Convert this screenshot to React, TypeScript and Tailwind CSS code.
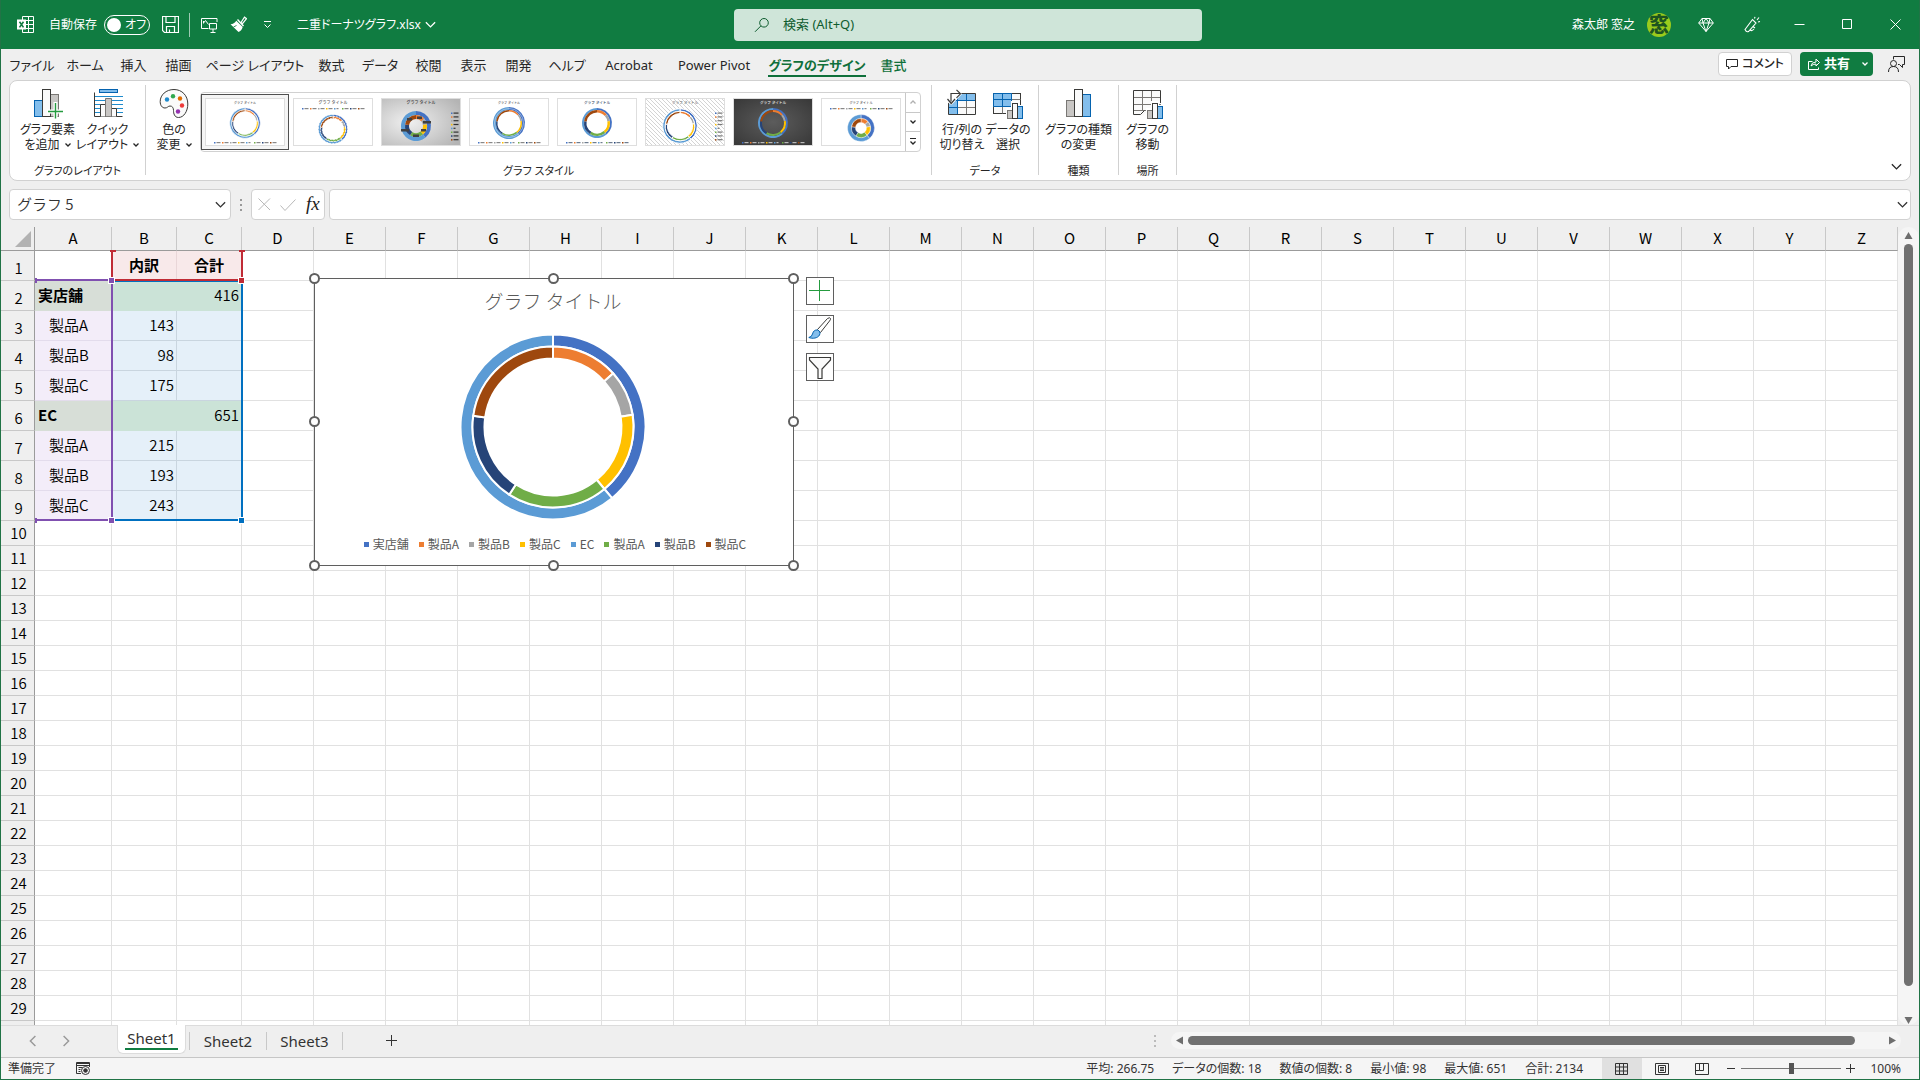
import type { ReactNode } from "react";
import { clsx } from "clsx";

const BLUE = "#4472c4";
const ORANGE = "#ed7d31";
const GRAY = "#a5a5a5";
const YELLOW = "#ffc000";
const SKY = "#5b9bd5";
const GREEN = "#70ad47";
const NAVY = "#264478";
const BROWN = "#9e480e";

type Slice = { value: number; color: string };

const outerRing: Slice[] = [
  { value: 416, color: BLUE },
  { value: 651, color: SKY },
];

const innerRing: Slice[] = [
  { value: 143, color: ORANGE },
  { value: 98, color: GRAY },
  { value: 175, color: YELLOW },
  { value: 215, color: GREEN },
  { value: 193, color: NAVY },
  { value: 243, color: BROWN },
];

const legend = [
  { label: "実店舗", color: "bg-[#4472c4]" },
  { label: "製品A", color: "bg-[#ed7d31]" },
  { label: "製品B", color: "bg-[#a5a5a5]" },
  { label: "製品C", color: "bg-[#ffc000]" },
  { label: "EC", color: "bg-[#5b9bd5]" },
  { label: "製品A", color: "bg-[#70ad47]" },
  { label: "製品B", color: "bg-[#264478]" },
  { label: "製品C", color: "bg-[#9e480e]" },
];

const legendColors = [BLUE, ORANGE, GRAY, YELLOW, SKY, GREEN, NAVY, BROWN];

const tabs = [
  { label: "ファイル", width: "w-[54px]" },
  { label: "ホーム", width: "w-[52px]" },
  { label: "挿入", width: "w-[45px]" },
  { label: "描画", width: "w-[45px]" },
  { label: "ページ レイアウト", width: "w-[108px]" },
  { label: "数式", width: "w-[45px]" },
  { label: "データ", width: "w-[52px]" },
  { label: "校閲", width: "w-[45px]" },
  { label: "表示", width: "w-[45px]" },
  { label: "開発", width: "w-[45px]" },
  { label: "ヘルプ", width: "w-[52px]" },
  { label: "Acrobat", width: "w-[72px]" },
  { label: "Power Pivot", width: "w-[98px]" },
  { label: "グラフのデザイン", width: "w-[108px]", active: true },
  { label: "書式", width: "w-[45px]", green: true },
];

const columns = "ABCDEFGHIJKLMNOPQRSTUVWXYZ".split("");

const ROWS = 29;
const rows = Array.from({ length: ROWS + 1 }, (_, i) => i + 1);

const cells: Record<string, string> = {
  B1: "内訳",
  C1: "合計",
  A2: "実店舗",
  C2: "416",
  A3: "製品A",
  B3: "143",
  A4: "製品B",
  B4: "98",
  A5: "製品C",
  B5: "175",
  A6: "EC",
  C6: "651",
  A7: "製品A",
  B7: "215",
  A8: "製品B",
  B8: "193",
  A9: "製品C",
  B9: "243",
};

function cellClass(col: string, row: number) {
  const plain = "border-[#e1e1e1]";
  if (!"ABC".includes(col) || row > 9) return plain;
  const total = row === 2 || row === 6;
  if (row === 1) {
    return col === "A" ? plain : "border-[#e9d6d8] bg-[#f8e9ea] text-center font-bold";
  }
  if (col === "A") {
    return total
      ? "border-[#d7ded7] bg-[#d7ded7] pl-[3px] text-left font-bold"
      : "border-[#e3dcec] bg-[#f3edf9] pl-[14px] text-left font-[350]";
  }
  return total
    ? "border-[#cbe3d7] bg-[#cbe3d7] pr-0.5 text-right font-[350]"
    : "border-[#c9d5df] bg-[#e5f0f9] pr-0.5 text-right font-[350]";
}

function ringPaths(slices: Slice[], cx: number, cy: number, r1: number, r2: number) {
  const total = slices.reduce((sum, s) => sum + s.value, 0);
  let angle = -Math.PI / 2;
  return slices.map((s) => {
    const a = angle;
    const b = angle + (s.value / total) * Math.PI * 2;
    angle = b;
    const big = b - a > Math.PI ? 1 : 0;
    const p = (r: number, t: number) =>
      `${(cx + r * Math.cos(t)).toFixed(2)} ${(cy + r * Math.sin(t)).toFixed(2)}`;
    return {
      color: s.color,
      d: `M${p(r2, a)}A${r2} ${r2} 0 ${big} 1 ${p(r2, b)}L${p(r1, b)}A${r1} ${r1} 0 ${big} 0 ${p(r1, a)}Z`,
    };
  });
}

type DonutProps = {
  cx: number;
  cy: number;
  hole: number;
  mid: number;
  r: number;
  gap?: string;
  gapWidth?: number;
  dash?: string;
};

function Donut({ cx, cy, hole, mid, r, gap = "#fff", gapWidth = 0.5, dash }: DonutProps) {
  const paths = [
    ...ringPaths(outerRing, cx, cy, mid, r),
    ...ringPaths(innerRing, cx, cy, hole, mid),
  ];
  return (
    <g stroke={gap} strokeWidth={gapWidth} strokeDasharray={dash}>
      {paths.map((p) => (
        <path key={p.d} d={p.d} fill={p.color} />
      ))}
    </g>
  );
}

function Icon({
  size = 16,
  box = size,
  children,
  className,
}: {
  size?: number;
  box?: number;
  children: ReactNode;
  className?: string;
}) {
  return (
    <svg
      width={size}
      height={size}
      viewBox={`0 0 ${box} ${box}`}
      fill="none"
      stroke="currentColor"
      aria-hidden="true"
      className={clsx("shrink-0", className)}
    >
      {children}
    </svg>
  );
}

function Chevron({ size = 10, className }: { size?: number; className?: string }) {
  return (
    <Icon size={size} box={10} className={className}>
      <path d="M.8 3 5 7.2 9.2 3" strokeWidth={1.2} />
    </Icon>
  );
}

function SmallChevron() {
  return (
    <svg width="6" height="4" viewBox="0 0 6 4" fill="none" stroke="currentColor" strokeWidth="1.3" aria-hidden="true">
      <path d="M.5.5 3 3 5.5.5" />
    </svg>
  );
}

/* ---------- title bar ---------- */

function TitleBar() {
  return (
    <header className="flex h-[49px] shrink-0 items-center bg-[#107c41] text-xs text-white">
      <div className="flex flex-1 items-center pl-4">
        <Icon size={17} box={17}>
          <path d="M5.5 4V.5h11v16h-11V13M5.5 4.5h11M5.5 8.5h11M5.5 12.5h11M11.5.5v16" />
          <rect x="0" y="3.5" width="9" height="10" fill="#fff" stroke="none" />
          <path d="m2.5 5.8 4 5.6m0-5.6-4 5.6" stroke="#107c41" strokeWidth={1.6} />
        </Icon>
        <label className="ml-[15px] flex cursor-pointer items-center gap-[7px] whitespace-nowrap">
          自動保存
          <input type="checkbox" className="sr-only" />
          <span className="flex h-5 w-[46px] items-center gap-1 rounded-full border border-white pl-0.5 [font-feature-settings:'palt']">
            <span className="h-3.5 w-3.5 shrink-0 rounded-full bg-white" />
            オフ
          </span>
        </label>
        <button aria-label="上書き保存" className="ml-3">
          <Icon size={17} box={17}>
            <path d="M.5.5h16v16h-14l-2-2zM4 .5v6h9v-6M4.5 16.5v-6h8v6M7.5 13.5v3" strokeWidth={1.2} />
          </Icon>
        </button>
        <span className="ml-2.5 h-6 w-px bg-white/60" />
        <button aria-label="画面の領域" className="ml-[11px]">
          <Icon size={17} box={17}>
            <path d="M7.5 12.5h-7v-10h15.500v3.500M2.5 7l2-2.500 3 4M8.5 7.500h7v5.500h-7zM12 13v3M9.5 16.5h5M2.500 5v2.500" />
          </Icon>
        </button>
        <button aria-label="書式のコピー" className="ml-3">
          <Icon size={17} box={17}>
            <path d="M11 6.500 14.500 1.200l2 1.500-4 5z" strokeWidth={1.2} />
            <path d="m7.500 3.500 6 6.500" strokeWidth={1.4} />
            <path d="M6.300 4.800C4.800 7 3 8 .5 8.300L8.500 16c2-.8 3.500-2.500 4.200-5z" fill="#fff" stroke="none" />
            <path d="m3.500 11 3-1.500" stroke="#107c41" strokeWidth={0.8} />
          </Icon>
        </button>
        <button aria-label="クイック アクセス ツール バーのカスタマイズ" className="ml-4">
          <Icon size={9} box={9}>
            <path d="M1 1.5h7M1.5 4.5l3 3 3-3" />
          </Icon>
        </button>
        <button className="ml-[25px] flex items-center gap-1">
          <span className="[font-feature-settings:'palt']">二重ドーナツグラフ.xlsx</span>
          <Chevron size={11} />
        </button>
      </div>

      <label className="flex h-8 w-[468px] items-center rounded-[4px] bg-[#cfe5d9] pl-5 text-[#0e5c2f]">
        <Icon size={16}>
          <circle cx="10" cy="5.8" r="4.3" />
          <path d="m6.8 9-5.800 5.800" />
        </Icon>
        <input
          type="search"
          aria-label="検索"
          placeholder="検索 (Alt+Q)"
          className="ml-[13px] flex-1 bg-transparent text-[13px] outline-none placeholder:text-[#0e5c2f]"
        />
      </label>

      <div className="flex flex-1 items-center justify-end">
        <span>森太郎 窓之</span>
        <span className="ml-3 flex h-6 w-6 items-center justify-center overflow-hidden rounded-full bg-[#9acb1c] text-[20px] leading-6 font-black text-[#1d5420]">
          窓
        </span>
        <button aria-label="Premium" className="ml-[27px]">
          <Icon size={16}>
            <path d="M4 1.5h8L15.3 6 8 14.5.7 6zM.7 6h14.600M5 6l3 8.500L11 6M4 1.500 5 6l3-4.500L11 6l1-4.500" />
          </Icon>
        </button>
        <button aria-label="ペン" className="ml-[30px]">
          <Icon size={17} box={17}>
            <path d="m1 13.5 7.500-10 3.500 3.500-7.500 8.500q-2 1-3.500-2zM9 10.500l2 1.500M6 14q2 1.500 4-1M10.500 2.500 11 .8M13 4l2-2.500M14 6l2-.5" strokeWidth={1.1} />
          </Icon>
        </button>
        <button aria-label="最小化" className="ml-[14px] flex w-12 justify-center">
          <Icon size={11}><path d="M.5 5.5h10" /></Icon>
        </button>
        <button aria-label="最大化" className="flex w-12 justify-center">
          <Icon size={11}><path d="M.5.5h9v9h-9z" /></Icon>
        </button>
        <button aria-label="閉じる" className="flex w-12 justify-center">
          <Icon size={11}><path d="m.5.5 10 10m0-10-10 10" /></Icon>
        </button>
      </div>
    </header>
  );
}

/* ---------- ribbon ---------- */

function TabRow() {
  return (
    <nav className="flex h-[31px] shrink-0 items-center pl-1 text-[13px] text-[#262626]">
      {tabs.map((tab) => (
        <button
          key={tab.label}
          className={clsx(
            "flex h-full items-center justify-center whitespace-nowrap [font-feature-settings:'palt']",
            tab.width,
            (tab.active || tab.green) && "text-[#0f703b]",
            tab.active && "font-bold",
            tab.green && "font-medium",
          )}
        >
          <span className={clsx("border-b-2 pt-0.5 leading-5", tab.active ? "border-[#0f703b]" : "border-transparent")}>
            {tab.label}
          </span>
        </button>
      ))}
      <div className="ml-auto flex items-center self-start pt-[3px] pr-[14px]">
        <button className="flex h-6 w-[74px] items-center justify-center gap-1 rounded-[4px] border border-[#d1d1d1] bg-white text-xs font-medium [font-feature-settings:'palt']">
          <Icon size={12}><path d="M.5 1.5h11v7H5l-2.500 2.500V8.500h-2z" /></Icon>
          コメント
        </button>
        <button className="ml-2 flex h-6 w-[73px] items-center rounded-[4px] bg-[#107c41] pl-2 text-[13px] font-bold text-white">
          <Icon size={12}>
            <path d="M4.5 3.5h-4v8h10v-2M3 8q.5-4 5-4V1l3.500 3.500L8 8V6Q5 6 3 8" />
          </Icon>
          <span className="ml-1">共有</span>
          <span className="ml-3"><SmallChevron /></span>
        </button>
        <button aria-label="アカウント" className="ml-[15px]">
          <Icon size={17} box={17}>
            <circle cx="5.5" cy="7.5" r="3" />
            <path d="M.5 16q0-5.500 5-5.500t5 5.500M5.500 3.500v-3h11v8h-2v3l-3-3H10" />
          </Icon>
        </button>
      </div>
    </nav>
  );
}

function RibbonButton({
  icon,
  lines,
  drop,
  className,
}: {
  icon: ReactNode;
  lines: [string, string];
  drop?: boolean;
  className?: string;
}) {
  return (
    <button className={clsx("flex flex-col items-center whitespace-nowrap pt-1 text-xs leading-[15px] [font-feature-settings:'palt']", className)}>
      {icon}
      <span className="mt-[3px]">{lines[0]}</span>
      <span className="flex items-center gap-[5px]">
        {lines[1]}
        {drop && <SmallChevron />}
      </span>
    </button>
  );
}

function RibbonGroup({ label, width, children }: { label: string; width: string; children: ReactNode }) {
  return (
    <section className={clsx("flex h-[90px] flex-col border-r border-[#d1d1d1]", width)}>
      <div className="flex flex-1 justify-center">{children}</div>
      <h2 className="text-center text-[11px] leading-2 [font-feature-settings:'palt']">{label}</h2>
    </section>
  );
}

function Bars({ x = 0, colors }: { x?: number; colors: "add" | "type" }) {
  const blue = { fill: "#83beec", stroke: "#0563af" };
  const gray = { fill: "#c8c6c4", stroke: "#797774" };
  const left = colors === "add" ? blue : gray;
  const right = colors === "add" ? gray : blue;
  return (
    <g transform={`translate(${x} 0)`}>
      <rect x=".5" y="11.5" width="8" height="16" {...left} />
      <rect x="16.5" y="5.5" width="8" height="22" {...right} />
      <rect x="8.5" y=".5" width="8" height="27" fill="#fafafa" stroke="#3a3a38" />
    </g>
  );
}

function SmallBars() {
  return (
    <g>
      <path d="M13 19h5v-7h8v4h5v14H13z" fill="#fff" stroke="none" />
      <rect x="14.5" y="21.5" width="5" height="8" fill="#c8c6c4" stroke="#797774" />
      <rect x="24.5" y="17.5" width="5" height="12" fill="#83beec" stroke="#0563af" />
      <rect x="19.5" y="14.5" width="5" height="15" fill="#fafafa" stroke="#3a3a38" />
    </g>
  );
}

function AddElementIcon() {
  return (
    <Icon size={30}>
      <Bars x={1} colors="add" />
      <path d="M22.5 13v17M14 22.5h16" stroke="#fff" strokeWidth={4} />
      <path d="M22.5 14v15.500M15 22.500h15" stroke="#259b3f" strokeWidth={1.4} />
    </Icon>
  );
}

function QuickLayoutIcon() {
  return (
    <Icon size={30}>
      <rect x="6.5" y=".5" width="18" height="3" fill="#83beec" stroke="#0563af" />
      <path d="M2 7.5h28M2 11.5h28M2 15.5h28M2 19.5h28M2 23.5h28" stroke="#1e8bcd" />
      <path d="M1.5 3.5v24h28" stroke="#3a3a38" />
      <path d="M7.5 27.5v-12h5v12M18.5 27.5v-8h5v8" fill="#fafafa" stroke="#3a3a38" />
      <path d="M12.5 27.5v-18h6v18" fill="#c8c6c4" stroke="#797774" />
    </Icon>
  );
}

function PaletteIcon() {
  return (
    <Icon size={30}>
      <path
        d="M15 .5C7 .5 1.200 6 1.200 12.500c0 4 2 6.500 4.800 6.500 2.500 0 3-2 5-2 2.500 0 3.500 2 3.500 4.500 0 3 1 7 5 7 5.500 0 9.300-6.500 9.300-13.500C28.800 6.500 23 .5 15 .5z"
        fill="#fafafa"
        stroke="#3a3a38"
      />
      <g stroke="none">
        <circle cx="8" cy="10.5" r="2.2" fill="#1e8bcd" />
        <circle cx="14" cy="7.3" r="2.2" fill="#2fa84f" />
        <circle cx="21" cy="9.5" r="2.2" fill="#e06c00" />
        <circle cx="23" cy="16.5" r="2.2" fill="#ee3a3a" />
        <circle cx="19" cy="22.5" r="2.2" fill="#9332ae" />
      </g>
    </Icon>
  );
}

function SwapIcon() {
  return (
    <Icon size={30}>
      <rect x="1.5" y="4.5" width="27" height="21" fill="#fafafa" stroke="none" />
      <path d="M1.5 11.5v14h9v-14zM10.5 4.5v7h18v-7z" fill="#83beec" stroke="none" />
      <path d="M10.5 18.5h18M19.5 11.5v14" stroke="#797774" />
      <path d="M1.5 11.5h27M1.5 18.5h9M10.5 4.5v21M19.5 4.5v7" stroke="#0563af" />
      <path d="M1.5 4.5h27v21h-27z" stroke="#3a3a38" />
      <path d="M0 2h11l4 3L4.500 16 0 13z" fill="#fff" stroke="none" />
      <path d="M4 12.5v-8h9M9.500.8l4 4-4 4M.5 10l3.700 4.500L8 10" stroke="#3a3a38" strokeWidth={1.2} />
    </Icon>
  );
}

function SelectDataIcon() {
  return (
    <Icon size={30}>
      <rect x=".5" y="4.5" width="27" height="20" fill="#fafafa" stroke="#3a3a38" />
      <path d="M.5 17.5h27M9.5 17.5v7M18.5 10.5h9M18.5 4.5v20" stroke="#797774" />
      <path d="M.5 4.5h18v13H.5zM.5 10.5h18M9.5 4.5v13" fill="#83beec" stroke="#0563af" />
      <SmallBars />
    </Icon>
  );
}

function MoveChartIcon() {
  return (
    <Icon size={30}>
      <path d="M.5 1.5h27v20h-13l-4 5H.5z" fill="#fafafa" stroke="none" />
      <path d="M1 8.5h27M1 15.5h27M1 21.5h14M9.5 1.5v20M18.5 1.5v20" stroke="#797774" />
      <path d="M27.5 14V1.5H.5v24h7l4-4" stroke="#3a3a38" />
      <SmallBars />
    </Icon>
  );
}

function Thumb({
  bg = "#fff",
  ink = "#555",
  legendAt,
  titleSize = 3.6,
  selected,
  index,
  children,
}: {
  bg?: string;
  ink?: string;
  legendAt: "top" | "bottom" | "right";
  titleSize?: number;
  selected?: boolean;
  index: number;
  children: ReactNode;
}) {
  return (
    <button
      aria-label={`スタイル ${index}`}
      className={clsx(
        "flex h-14 w-[88px] shrink-0 items-center justify-center border",
        selected ? "border-[#505050] bg-[#f5f5f5]" : "border-transparent",
      )}
    >
      <svg width="80" height="48" viewBox="0 0 80 48" aria-hidden="true">
        <defs>
          <radialGradient id="silver" cx="35%" cy="50%" r="75%">
            <stop offset="0" stopColor="#f0f0f0" />
            <stop offset="1" stopColor="#b4b4b4" />
          </radialGradient>
          <radialGradient id="charcoal" cx="50%" cy="50%" r="65%">
            <stop offset="0" stopColor="#5c5c5c" />
            <stop offset="1" stopColor="#3a3a3a" />
          </radialGradient>
          <pattern id="hatch" width="4" height="4" patternUnits="userSpaceOnUse">
            <rect width="4" height="4" fill="#fff" />
            <path d="M-1-1 5 5M3-1 5 1M-1 3 1 5" stroke="#d4d4d4" strokeWidth="1" />
          </pattern>
        </defs>
        <rect x=".5" y=".5" width="79" height="47" fill={bg} stroke="#dedede" />
        <text x="40" y="6" textAnchor="middle" fontSize={titleSize} fontWeight="500" fill={ink}>
          グラフ タイトル
        </text>
        {legendColors.map((c, i) =>
          legendAt === "right" ? (
            <g key={c}>
              <rect x="70" y={14.5 + i * 3.8} width="1.500" height="1.500" fill={c} />
              <rect x="72.5" y={14.5 + i * 3.8} width={i === 4 ? 2 : 5} height="1.200" fill={ink} />
            </g>
          ) : (
            <g key={c}>
              <rect x={9 + i * 8} y={legendAt === "top" ? 10 : 44} width="1.500" height="1.500" fill={c} />
              <rect x={11.5 + i * 8} y={legendAt === "top" ? 10 : 44} width={i === 4 ? 2 : 4} height="1.200" fill={ink} opacity=".7" />
            </g>
          ),
        )}
        {children}
      </svg>
    </button>
  );
}

function StyleGallery() {
  return (
    <div className="mt-[7px] flex h-[60px] w-[721px] rounded-[4px] border border-[#d1d1d1]">
      <div className="flex flex-1 items-center">
        <Thumb index={1} legendAt="bottom" titleSize={3} selected>
          <Donut cx={40} cy={25} hole={11.5} mid={13.2} r={15.3} gapWidth={0.7} />
        </Thumb>
        <Thumb index={2} legendAt="top" titleSize={4}>
          <Donut cx={40} cy={31} hole={10.8} mid={12.6} r={14.6} gapWidth={0.9} dash="1.5 1.5" />
        </Thumb>
        <Thumb index={3} bg="url(#silver)" ink="#333" titleSize={4} legendAt="right">
          <Donut cx={35} cy={28} hole={7} mid={11} r={15} gap="none" />
          <g fill="#404040">
            <rect x="26" y="20" width="5" height="2.5" />
            <rect x="36" y="18.5" width="5" height="2.5" />
            <rect x="42" y="23" width="8" height="2.5" />
            <rect x="40" y="31" width="5" height="2.5" />
            <rect x="32" y="36.5" width="6" height="2.5" />
            <rect x="20" y="31" width="8" height="2.5" />
          </g>
        </Thumb>
        <Thumb index={4} legendAt="bottom" titleSize={3}>
          <Donut cx={40} cy={25} hole={11.5} mid={13} r={16} gap="none" />
          <circle cx="40" cy="25" r="14.5" fill="none" stroke="#fff" strokeWidth="1" opacity=".4" />
        </Thumb>
        <Thumb index={5} ink="#2f4560" legendAt="bottom">
          <Donut cx={40} cy={25} hole={10.5} mid={13} r={15} gap="none" />
        </Thumb>
        <Thumb index={6} bg="url(#hatch)" ink="#777" legendAt="right">
          <circle cx="35" cy="28" r="16.5" fill="#fff" />
          <Donut cx={35} cy={28} hole={12.5} mid={14.8} r={17.3} gapWidth={1} />
        </Thumb>
        <Thumb index={7} bg="url(#charcoal)" ink="#eee" legendAt="bottom">
          <Donut cx={40} cy={25} hole={11} mid={13} r={15} gap="none" />
        </Thumb>
        <Thumb index={8} legendAt="top" titleSize={3.2}>
          <Donut cx={40} cy={30} hole={5.5} mid={9.5} r={13.5} gapWidth={0.4} />
        </Thumb>
      </div>
      <div className="flex w-[15px] flex-col divide-y divide-[#c8c8c8] border-l border-[#c8c8c8]">
        <button aria-label="上へ" className="flex flex-1 items-center justify-center text-[#b0b0b0]">
          <span className="rotate-180"><SmallChevron /></span>
        </button>
        <button aria-label="下へ" className="flex flex-1 items-center justify-center"><SmallChevron /></button>
        <button aria-label="その他" className="flex flex-1 flex-col items-center justify-center gap-0.5">
          <span className="h-px w-1.5 bg-[#262626]" />
          <SmallChevron />
        </button>
      </div>
    </div>
  );
}

function Ribbon() {
  return (
    <div className="mx-2 flex h-[101px] shrink-0 rounded-lg border border-[#d1d1d1] bg-white pt-1 text-[#262626]">
      <RibbonGroup label="グラフのレイアウト" width="w-[136px]">
        <RibbonButton className="w-[60px]" icon={<AddElementIcon />} lines={["グラフ要素", "を追加"]} drop />
        <RibbonButton className="w-[60px]" icon={<QuickLayoutIcon />} lines={["クイック", "レイアウト"]} drop />
      </RibbonGroup>
      <RibbonGroup label="グラフ スタイル" width="w-[786px]">
        <div className="flex gap-1 pr-1">
          <RibbonButton className="w-[44px]" icon={<PaletteIcon />} lines={["色の", "変更"]} drop />
          <StyleGallery />
        </div>
      </RibbonGroup>
      <RibbonGroup label="データ" width="w-[107px]">
        <RibbonButton className="w-[46px]" icon={<SwapIcon />} lines={["行/列の", "切り替え"]} />
        <RibbonButton className="w-[46px]" icon={<SelectDataIcon />} lines={["データの", "選択"]} />
      </RibbonGroup>
      <RibbonGroup label="種類" width="w-[80px]">
        <RibbonButton
          icon={<Icon size={30}><Bars x={2} colors="type" /></Icon>}
          lines={["グラフの種類", "の変更"]}
        />
      </RibbonGroup>
      <RibbonGroup label="場所" width="w-[58px]">
        <RibbonButton icon={<MoveChartIcon />} lines={["グラフの", "移動"]} />
      </RibbonGroup>
      <button aria-label="リボンを折りたたむ" className="mt-auto mr-2 mb-2 ml-auto">
        <Chevron size={11} />
      </button>
    </div>
  );
}

function FormulaBar() {
  return (
    <div className="mx-2 mt-2 mb-[7px] flex h-[31px] shrink-0 text-[#333]">
      <label className="flex w-[222px] items-center rounded-[4px] border border-[#d1d1d1] bg-white pr-1 pl-[7px]">
        <input
          aria-label="名前ボックス"
          defaultValue="グラフ 5"
          className="w-0 flex-1 font-['Noto_Sans_CJK_JP',sans-serif] text-[15px] font-[350] outline-none"
        />
        <Chevron size={11} />
      </label>
      <div className="flex w-5 flex-col items-center justify-center gap-[3px]">
        <span className="h-0.5 w-0.5 bg-[#999]" />
        <span className="h-0.5 w-0.5 bg-[#999]" />
        <span className="h-0.5 w-0.5 bg-[#999]" />
      </div>
      <div className="flex w-[74px] items-center rounded-[4px] border border-[#d1d1d1] bg-white pl-1.5 text-[#b8b8b8]">
        <button aria-label="キャンセル"><Icon size={13}><path d="m.5.5 11.500 11.500m0-11.500L.5 12" /></Icon></button>
        <button aria-label="入力" className="ml-[9px]"><Icon size={16}><path d="m.5 8.5 4.500 5L15.500 2.500" /></Icon></button>
        <button className="ml-2.5 font-['Liberation_Serif',serif] text-[19px] text-[#222] italic">fx</button>
      </div>
      <label className="ml-1 flex flex-1 items-center rounded-[4px] border border-[#d1d1d1] bg-white pr-0.5 pl-1">
        <input aria-label="数式バー" className="flex-1 text-[15px] outline-none" />
        <Chevron size={11} />
      </label>
    </div>
  );
}

/* ---------- worksheet ---------- */

function ChartObject() {
  const dots = [
    "-left-1.5 -top-1.5",
    "left-1/2 -ml-1.5 -top-1.5",
    "-right-1.5 -top-1.5",
    "-left-1.5 top-1/2 -mt-1.5",
    "-right-1.5 top-1/2 -mt-1.5",
    "-left-1.5 -bottom-1.5",
    "left-1/2 -ml-1.5 -bottom-1.5",
    "-right-1.5 -bottom-1.5",
  ];
  return (
    <div className="absolute top-[51px] left-[313px] flex h-[288px] w-[480px] flex-col items-center border border-[#5f5f5f] bg-white pr-0.5 font-['Noto_Sans_CJK_JP',sans-serif] text-[#595959]">
      <h3 className="mt-2 text-[19px] leading-7 font-light">グラフ タイトル</h3>
      <svg width="188" height="188" viewBox="0 0 188 188" className="mt-[18px] shrink-0" role="img" aria-label="二重ドーナツグラフ">
        <Donut cx={94} cy={94} hole={68.5} mid={80.5} r={92.5} gapWidth={2} />
      </svg>
      <ul className="mt-[13px] flex gap-2.5 pl-1 text-xs leading-5">
        {legend.map((item, i) => (
          <li key={i} className="flex items-center gap-1 whitespace-nowrap">
            <span className={clsx("h-[5px] w-[5px]", item.color)} />
            {item.label}
          </li>
        ))}
      </ul>
      {dots.map((pos) => (
        <span key={pos} className={clsx("absolute h-[11px] w-[11px] rounded-full border-2 border-[#5f5f5f] bg-white", pos)} />
      ))}
    </div>
  );
}

function ChartButtons() {
  const cls = "flex h-7 w-7 items-center justify-center border border-[#5f5f5f] bg-white";
  return (
    <div className="absolute top-[50px] left-[805px] flex flex-col gap-2.5">
      <button aria-label="グラフ要素" className={cls}>
        <Icon size={22} className="text-[#259b3f]"><path d="M10.5 0v21M0 10.5h21" /></Icon>
      </button>
      <button aria-label="グラフ スタイル" className={cls}>
        <Icon size={24}>
          <path d="M9.5 12.5 19.500 1.500q2.500-1.500 3 0 .3 1-1 2.500L12.500 15.500z" fill="#fff" stroke="#3a3a38" />
          <path d="M.8 20.5q3-.5 3.700-3.500c.7-3 2.500-4.300 5-4 2.300.6 3 3 2 5-1.700 3.300-7 4-10.700 2.500z" fill="#83beec" stroke="#0563af" />
        </Icon>
      </button>
      <button aria-label="グラフ フィルター" className={cls}>
        <Icon size={24}>
          <path d="M1.5 2.5h21v2.500l-8.500 9v9.500h-4V14l-8.500-9z" fill="#fafafa" stroke="#3a3a38" strokeWidth={1.2} />
        </Icon>
      </button>
    </div>
  );
}

function RangeMarks() {
  return (
    <>
      <span className="absolute top-[53px] left-[110px] h-[241px] w-[132px] border-2 border-[#0070c0]" />
      <span className="absolute top-[23px] left-[110px] h-[31px] w-[132px] border-x-2 border-b-2 border-[#c02b35]" />
      <span className="absolute top-[52px] left-[34px] h-[242px] w-[78px] border-y-2 border-r-2 border-[#8050b0]" />
      <span className="absolute top-[23px] left-[109px] h-0.5 w-1.5 bg-[#c02b35]" />
      <span className="absolute top-[23px] left-[238px] h-0.5 w-1.5 bg-[#c02b35]" />
      <span className="absolute top-[51px] left-[238px] h-[5px] w-[5px] bg-[#c02b35] outline outline-white" />
      <span className="absolute top-[51px] left-[108px] h-[5px] w-[5px] bg-[#8050b0] outline outline-white" />
      <span className="absolute top-[291px] left-[108px] h-[5px] w-[5px] bg-[#8050b0] outline outline-white" />
      <span className="absolute top-[51px] left-[34px] h-[5px] w-0.5 bg-[#8050b0]" />
      <span className="absolute top-[291px] left-[34px] h-[5px] w-0.5 bg-[#8050b0]" />
      <span className="absolute top-[291px] left-[238px] h-[5px] w-[5px] bg-[#0070c0] outline outline-white" />
    </>
  );
}

function Worksheet() {
  return (
    <div className="relative min-w-0 flex-1 overflow-hidden bg-white font-['Noto_Sans_CJK_JP',sans-serif] text-[15px] text-black">
      <table className="w-[1897px] table-fixed border-separate border-spacing-0">
        <colgroup>
          <col className="w-[34px]" />
          <col className="w-[77px]" />
          <col className="w-[65px]" />
          <col className="w-[65px]" />
          {columns.slice(3).map((c) => (
            <col key={c} className="w-[72px]" />
          ))}
        </colgroup>
        <thead>
          <tr className="h-6 bg-[#efefef]">
            <th className="border-r border-b border-[#9b9b9b] p-0">
              <svg width="16" height="16" viewBox="0 0 16 16" className="mr-[3px] ml-auto" aria-hidden="true">
                <path d="M16 0v16H0z" fill="#b2b2b2" />
              </svg>
            </th>
            {columns.map((c) => (
              <th key={c} scope="col" className="border-r border-b border-r-[#c8c8c8] border-b-[#9b9b9b] p-0 pb-0.5 leading-[21px] font-normal">
                {c}
              </th>
            ))}
          </tr>
        </thead>
        <tbody>
          {rows.map((r) => (
            <tr key={r} className={r < 10 ? "h-[30px]" : "h-[25px]"}>
              <th scope="row" className="border-r border-b border-r-[#9b9b9b] border-b-[#c8c8c8] bg-[#efefef] p-0 pb-px pl-0.5 align-bottom leading-[22px] font-[350]">
                {r <= ROWS && r}
              </th>
              {columns.map((c) => (
                <td key={c} className={clsx("border-r border-b p-0 pb-0.5 leading-[22px]", cellClass(c, r))}>
                  {cells[c + r]}
                </td>
              ))}
            </tr>
          ))}
        </tbody>
      </table>
      <RangeMarks />
      <ChartObject />
      <ChartButtons />
    </div>
  );
}

function VerticalScroll() {
  return (
    <div className="flex w-[21px] shrink-0 flex-col items-center rounded-full bg-[#f5f5f5] pt-1 text-[#6e6e6e]">
      <Icon size={9}><path d="M4.5 1 8.500 8h-8z" fill="currentColor" stroke="none" /></Icon>
      <span className="mt-1 w-[9px] flex-1 rounded-full bg-[#707070]" />
      <span className="h-[30px]" />
      <Icon size={9}><path d="M4.5 8 8.500 1h-8z" fill="currentColor" stroke="none" /></Icon>
    </div>
  );
}

/* ---------- bottom ---------- */

function SheetTabs() {
  return (
    <div className="flex h-8 shrink-0 border-t border-[#dcdcdc] pb-0.5 text-[15px] text-[#333]">
      <div className="flex w-[116px] items-center gap-[21px] pl-[26px] text-[#999]">
        <button aria-label="前のシート"><Chevron size={12} className="rotate-90" /></button>
        <button aria-label="次のシート"><Chevron size={12} className="-rotate-90" /></button>
      </div>
      <button className="-mt-px flex h-[29px] w-[69px] justify-center rounded-b-md border-x border-b border-[#dcdcdc] bg-white">
        <span className="mt-px h-6 border-b-2 border-[#107c41] px-0.5 leading-6">Sheet1</span>
      </button>
      <div className="ml-[3px] flex h-[18px] items-center self-center">
        <button className="h-[18px] w-[77px] border-l border-[#c8c8c8] leading-[18px]">Sheet2</button>
        <button className="h-[18px] w-[77px] border-x border-[#c8c8c8] leading-[18px]">Sheet3</button>
      </div>
      <button aria-label="新しいシート" className="ml-[43px]">
        <Icon size={12}><path d="M5.5 0v11M0 5.5h11" /></Icon>
      </button>
      <div className="ml-auto flex items-center pr-[18px]">
        <div className="mr-[15px] flex flex-col gap-[3px]">
          <span className="h-0.5 w-0.5 bg-[#bbb]" />
          <span className="h-0.5 w-0.5 bg-[#bbb]" />
          <span className="h-0.5 w-0.5 bg-[#bbb]" />
        </div>
        <div className="flex h-[17px] w-[730px] items-center rounded-full bg-[#f5f5f5] px-1 text-[#6e6e6e]">
          <Icon size={9}><path d="M1 4.5 8 .5v8z" fill="currentColor" stroke="none" /></Icon>
          <span className="ml-1 h-[9px] flex-1 rounded-full bg-[#707070]" />
          <span className="w-[33px]" />
          <Icon size={9}><path d="M8 4.5 1 .5v8z" fill="currentColor" stroke="none" /></Icon>
        </div>
      </div>
    </div>
  );
}

const stats = [
  "平均: 266.75",
  "データの個数: 18",
  "数値の個数: 8",
  "最小値: 98",
  "最大値: 651",
  "合計: 2134",
];

function StatusBar() {
  return (
    <footer className="flex h-[22px] shrink-0 items-center border-t border-[#c6c6c6] bg-[#f5f5f5] pl-[7px] text-xs text-[#333]">
      <span>準備完了</span>
      <button aria-label="マクロの記録" className="ml-5">
        <Icon size={14}>
          <path d="M5 11.5H.5V.5h13V5M.5 3.500h13M2.500 5.500h4M2.500 7.500h2M2.500 9.500h2M.5 1.500h13" />
          <circle cx="9.5" cy="8.5" r="4" fill="#f5f5f5" />
          <circle cx="9.5" cy="8.5" r="1.8" fill="currentColor" />
        </Icon>
      </button>
      <div className="ml-auto flex gap-[18px] pr-[19px] [font-feature-settings:'palt']">
        {stats.map((s) => (
          <span key={s}>{s}</span>
        ))}
      </div>
      <button aria-label="標準" className="flex h-full w-10 items-center justify-center bg-[#e0e0e0]">
        <Icon size={14}><path d="M.5 1.5h12v11H.5zM.5 5h12M.5 9h12M4.500 1.500v11M8.500 1.500v11" /></Icon>
      </button>
      <button aria-label="ページ レイアウト" className="flex h-full w-10 items-center justify-center">
        <Icon size={14}><path d="M.5 1.5h13v11H.5zM3.500 3.500h7v7h-7zM5 5.500h4M5 7h4M5 8.500h4" /></Icon>
      </button>
      <button aria-label="改ページ プレビュー" className="flex h-full w-10 items-center justify-center">
        <Icon size={14}><path d="M.5 1.5h13v11H.5zM4.500 1.500v7H.5M8.500 1.500v7h-4" /></Icon>
      </button>
      <button aria-label="縮小" className="ml-[5px]"><Icon size={9}><path d="M0 4.5h8" /></Icon></button>
      <input
        type="range"
        aria-label="ズーム"
        defaultValue={50}
        className="mx-[5px] h-4 w-[100px] appearance-none bg-transparent [&::-webkit-slider-runnable-track]:h-px [&::-webkit-slider-runnable-track]:bg-[#777] [&::-webkit-slider-thumb]:-mt-[5px] [&::-webkit-slider-thumb]:h-[11px] [&::-webkit-slider-thumb]:w-[5px] [&::-webkit-slider-thumb]:appearance-none [&::-webkit-slider-thumb]:bg-[#555]"
      />
      <button aria-label="拡大"><Icon size={9}><path d="M0 4.5h9M4.500 0v9" /></Icon></button>
      <button className="w-[64px] pr-[18px] text-right">100%</button>
    </footer>
  );
}

export default function App() {
  return (
    <div className="flex h-screen flex-col overflow-hidden border-x border-b border-[#217346] bg-[#efefef] font-['Noto_Sans','Noto_Sans_CJK_JP',sans-serif]">
      <TitleBar />
      <TabRow />
      <Ribbon />
      <FormulaBar />
      <main className="flex min-h-0 flex-1">
        <Worksheet />
        <VerticalScroll />
      </main>
      <SheetTabs />
      <StatusBar />
    </div>
  );
}
